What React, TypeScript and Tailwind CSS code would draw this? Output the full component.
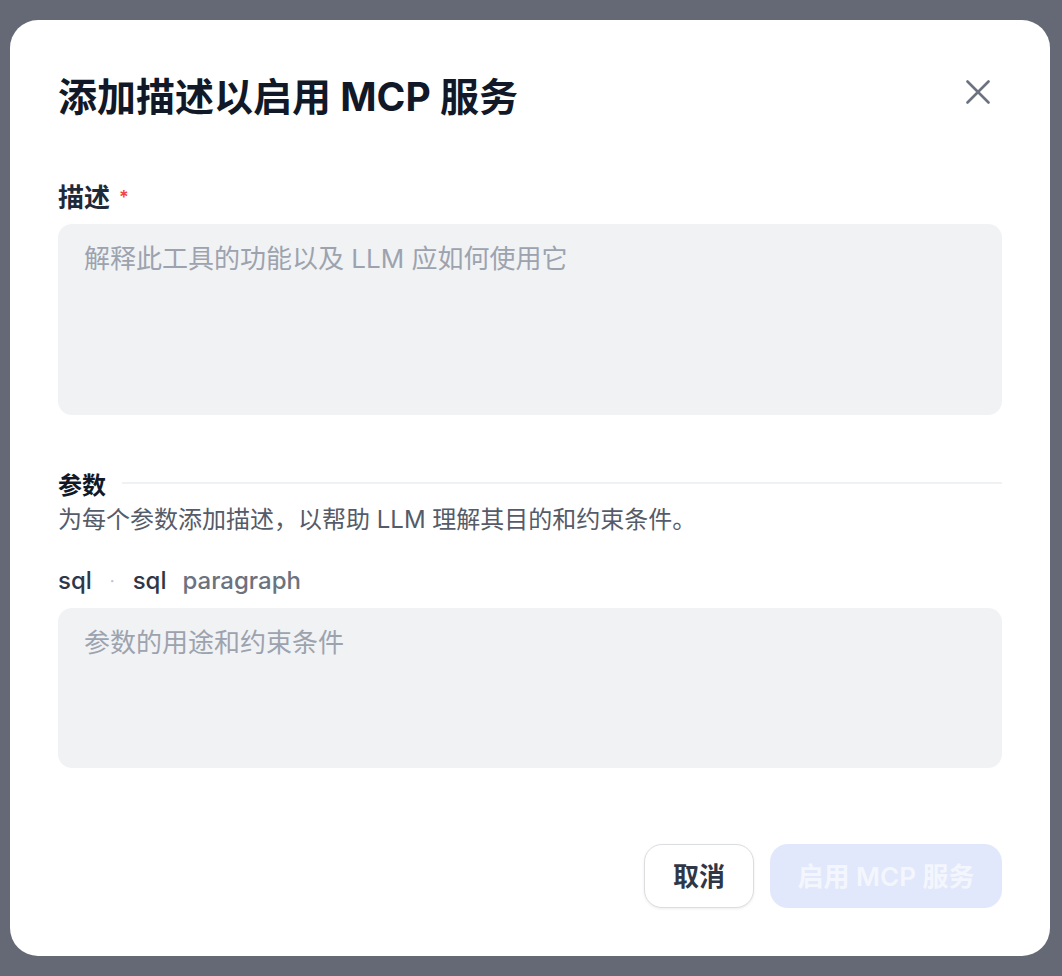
import React from "react";

const FONT = '"Inter", "Noto Sans CJK SC", sans-serif';

const CloseIcon = (): React.JSX.Element => (
  <svg width="24" height="24" viewBox="0 0 24 24" fill="none" stroke="currentColor" strokeWidth="2.6" strokeLinecap="round">
    <path d="M1.5 1.5 L22.5 22.5 M22.5 1.5 L1.5 22.5" />
  </svg>
);

const App = (): React.JSX.Element => {
  return (
    <div className="min-h-screen w-full bg-[#656975] pl-[10px] pr-[12px] pt-[20px] pb-[20px]" style={{ fontFamily: FONT }}>
      <div className="flex h-[936px] w-[1040px] flex-col rounded-[28px] bg-white px-12 pt-[50px] pb-12">
        {/* Header */}
        <div className="flex items-start justify-between">
          <h1 className="text-[39px] font-bold leading-[54px] text-[#111827]">添加描述以启用 MCP 服务</h1>
          <button className="-mt-[2px] flex h-12 w-12 items-center justify-center text-[#6b7280]">
            <CloseIcon />
          </button>
        </div>

        {/* Description */}
        <div className="mt-[56px] flex items-center text-[26px] font-semibold leading-[36px] text-[#1f2937]">
          描述
          <span className="ml-[9px] text-[18px] text-[#ef4444]">*</span>
        </div>
        <textarea
          className="mt-2 h-[191px] w-full resize-none rounded-[14px] bg-[#f1f2f4] px-[26px] pt-[17px] text-[26px] leading-[36px] text-[#111827] outline-none placeholder:text-[#9ca3af]"
          placeholder="解释此工具的功能以及 LLM 应如何使用它"
        />

        {/* Parameters */}
        <div className="mt-[55px] flex items-center gap-4">
          <span className="text-[24px] font-semibold leading-[32px] text-[#111827]">参数</span>
          <div className="mb-[6px] h-[2px] flex-1 bg-[#f0f1f3]" />
        </div>
        <p className="text-[24px] leading-[36px] text-[#545b69]">为每个参数添加描述，以帮助 LLM 理解其目的和约束条件。</p>

        <div className="mt-[25px] flex items-center text-[24px] font-medium leading-[36px]">
          <span className="text-[#2f3747]">sql</span>
          <span className="mx-[18px] text-[16px] text-[#c3c6cc]">·</span>
          <span className="text-[#2f3747]">sql</span>
          <span className="ml-4 text-[#6b7280]">paragraph</span>
        </div>
        <textarea
          className="mt-[9px] h-[160px] w-full resize-none rounded-[14px] bg-[#f1f2f4] px-[26px] pt-[17px] text-[26px] leading-[36px] text-[#111827] outline-none placeholder:text-[#9ca3af]"
          placeholder="参数的用途和约束条件"
        />

        {/* Footer */}
        <div className="mt-auto flex justify-end gap-4">
          <button className="h-16 w-[110px] rounded-[18px] border border-[#dcdde1] bg-white text-[26px] font-semibold text-[#2f3747] shadow-[0_1px_3px_rgba(0,0,0,0.08)]">
            取消
          </button>
          <button disabled className="h-16 w-[232px] rounded-[18px] bg-[#e1e8fb] text-[26px] font-semibold text-[#f4f6fd]">
            启用 MCP 服务
          </button>
        </div>
      </div>
    </div>
  );
};

export default App;
